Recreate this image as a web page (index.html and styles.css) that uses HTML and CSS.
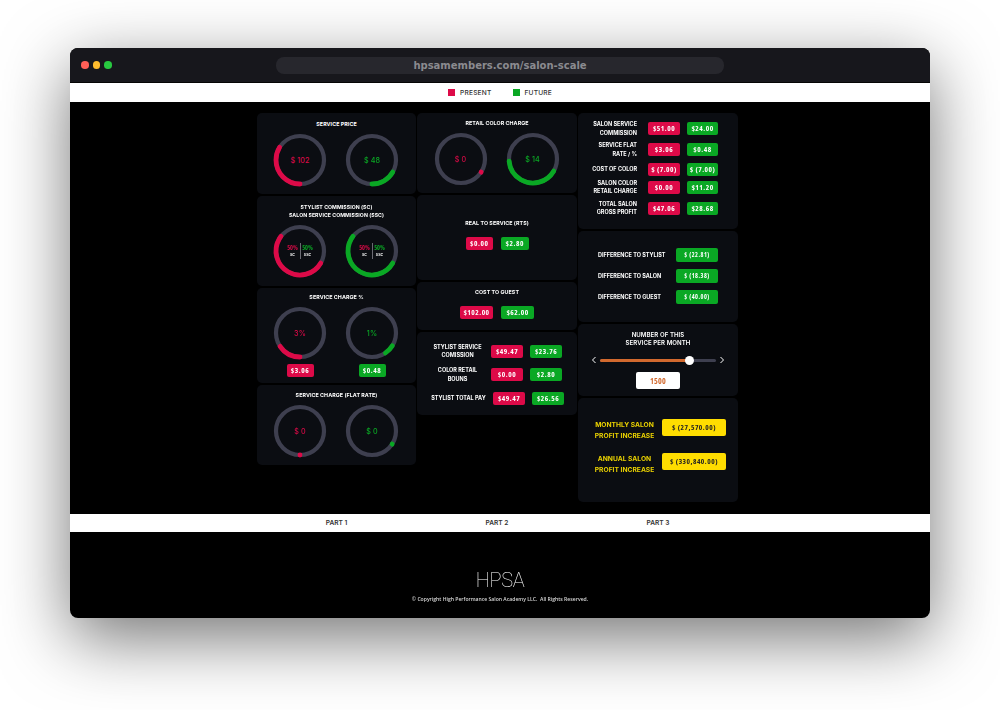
FILE: index.html
```html
<!DOCTYPE html>
<html lang="en">
<head>
<meta charset="utf-8">
<title>HPSA Salon Scale</title>
<link rel="stylesheet" href="styles.css">
</head>
<body>
<div class="window">
  <header class="titlebar">
    <div class="lights"><i class="light l-red"></i><i class="light l-yellow"></i><i class="light l-green"></i></div>
    <div class="address">hpsamembers.com/salon-scale</div>
  </header>
  <div class="legend">
    <span class="legend-item"><i class="swatch red"></i>PRESENT</span>
    <span class="legend-item"><i class="swatch green"></i>FUTURE</span>
  </div>
  <main class="columns">
    <section class="col">
      <div class="card c-price">
        <h3>SERVICE PRICE</h3>
        <div class="donuts">
          <div class="donut"><svg viewBox="0 0 52 52"><circle class="track" cx="26" cy="26" r="24"/><circle class="arc a-red" cx="26" cy="26" r="24" pathLength="360" stroke-dasharray="122 360" transform="rotate(90 26 26)"/></svg><span class="dv t-red">$ 102</span></div>
          <div class="donut"><svg viewBox="0 0 52 52"><circle class="track" cx="26" cy="26" r="24"/><circle class="arc a-green" cx="26" cy="26" r="24" pathLength="360" stroke-dasharray="60 360" transform="rotate(30 26 26)"/></svg><span class="dv t-green">$ 48</span></div>
        </div>
      </div>
      <div class="card c-comm">
        <h3>STYLIST COMMISSION (SC)<br>SALON SERVICE COMMISSION (SSC)</h3>
        <div class="donuts">
          <div class="donut"><svg viewBox="0 0 52 52"><circle class="track" cx="26" cy="26" r="24"/><circle class="arc a-red" cx="26" cy="26" r="24" pathLength="360" stroke-dasharray="188 360" transform="rotate(30 26 26)"/></svg>
            <div class="split"><div class="sp"><b class="t-red">50%</b><small>SC</small></div><div class="sp sp-r"><b class="t-green">50%</b><small>SSC</small></div></div></div>
          <div class="donut"><svg viewBox="0 0 52 52"><circle class="track" cx="26" cy="26" r="24"/><circle class="arc a-green" cx="26" cy="26" r="24" pathLength="360" stroke-dasharray="188 360" transform="rotate(30 26 26)"/></svg>
            <div class="split"><div class="sp"><b class="t-red">50%</b><small>SC</small></div><div class="sp sp-r"><b class="t-green">50%</b><small>SSC</small></div></div></div>
        </div>
      </div>
      <div class="card c-pct">
        <h3>SERVICE CHARGE %</h3>
        <div class="donuts">
          <div class="donut"><svg viewBox="0 0 52 52"><circle class="track" cx="26" cy="26" r="24"/><circle class="arc a-red" cx="26" cy="26" r="24" pathLength="360" stroke-dasharray="56 360" transform="rotate(90 26 26)"/></svg><span class="dv t-red">3%</span></div>
          <div class="donut"><svg viewBox="0 0 52 52"><circle class="track" cx="26" cy="26" r="24"/><circle class="arc a-green" cx="26" cy="26" r="24" pathLength="360" stroke-dasharray="24 360" transform="rotate(32 26 26)"/></svg><span class="dv t-green">1%</span></div>
        </div>
        <div class="under-pills"><span class="pill red">$3.06</span><span class="pill green">$0.48</span></div>
      </div>
      <div class="card c-flat">
        <h3>SERVICE CHARGE (FLAT RATE)</h3>
        <div class="donuts">
          <div class="donut"><svg viewBox="0 0 52 52"><circle class="track" cx="26" cy="26" r="24"/><circle class="arc a-red" cx="26" cy="26" r="24" pathLength="360" stroke-dasharray="0.1 360" transform="rotate(90 26 26)"/></svg><span class="dv t-red">$ 0</span></div>
          <div class="donut"><svg viewBox="0 0 52 52"><circle class="track" cx="26" cy="26" r="24"/><circle class="arc a-green" cx="26" cy="26" r="24" pathLength="360" stroke-dasharray="0.1 360" transform="rotate(33 26 26)"/></svg><span class="dv t-green">$ 0</span></div>
        </div>
      </div>
    </section>
    <section class="col">
      <div class="card c-retail">
        <h3>RETAIL COLOR CHARGE</h3>
        <div class="donuts">
          <div class="donut"><svg viewBox="0 0 52 52"><circle class="track" cx="26" cy="26" r="24"/><circle class="arc a-red" cx="26" cy="26" r="24" pathLength="360" stroke-dasharray="0.1 360" transform="rotate(33 26 26)"/></svg><span class="dv t-red">$ 0</span></div>
          <div class="donut"><svg viewBox="0 0 52 52"><circle class="track" cx="26" cy="26" r="24"/><circle class="arc a-green" cx="26" cy="26" r="24" pathLength="360" stroke-dasharray="145 360" transform="rotate(30 26 26)"/></svg><span class="dv t-green">$ 14</span></div>
        </div>
      </div>
      <div class="card c-rts">
        <h3>REAL TO SERVICE (RTS)</h3>
        <div class="pills"><span class="pill red">$0.00</span><span class="pill green">$2.80</span></div>
      </div>
      <div class="card c-cost">
        <h3>COST TO GUEST</h3>
        <div class="pills"><span class="pill red wide">$102.00</span><span class="pill green wide">$62.00</span></div>
      </div>
      <div class="card c-pay">
        <div class="row"><span class="label">STYLIST SERVICE COMISSION</span><span class="pill red">$49.47</span><span class="pill green">$23.76</span></div>
        <div class="row"><span class="label">COLOR RETAIL BOUNS</span><span class="pill red">$0.00</span><span class="pill green">$2.80</span></div>
        <div class="row"><span class="label nowrap">STYLIST TOTAL PAY</span><span class="pill red">$49.47</span><span class="pill green">$26.56</span></div>
      </div>
    </section>
    <section class="col">
      <div class="card c-gross">
        <div class="row"><span class="label">SALON SERVICE COMMISSION</span><span class="pill red">$51.00</span><span class="pill green">$24.00</span></div>
        <div class="row"><span class="label">SERVICE FLAT<br>RATE / %</span><span class="pill red">$3.06</span><span class="pill green">$0.48</span></div>
        <div class="row"><span class="label">COST OF COLOR</span><span class="pill red">$ (7.00)</span><span class="pill green">$ (7.00)</span></div>
        <div class="row"><span class="label">SALON COLOR<br>RETAIL CHARGE</span><span class="pill red">$0.00</span><span class="pill green">$11.20</span></div>
        <div class="row"><span class="label">TOTAL SALON<br>GROSS PROFIT</span><span class="pill red">$47.06</span><span class="pill green">$28.68</span></div>
      </div>
      <div class="card c-diff">
        <div class="row"><span class="label">DIFFERENCE TO STYLIST</span><span class="pill green">$ (22.81)</span></div>
        <div class="row"><span class="label">DIFFERENCE TO SALON</span><span class="pill green">$ (18.38)</span></div>
        <div class="row"><span class="label">DIFFERENCE TO GUEST</span><span class="pill green">$ (40.00)</span></div>
      </div>
      <div class="card c-count">
        <h3>NUMBER OF THIS<br>SERVICE PER MONTH</h3>
        <div class="slider">
          <svg class="chev" viewBox="0 0 6 8"><path d="M4.5 1 L1.5 4 L4.5 7"/></svg>
          <div class="rail"><div class="rail-fill"></div><div class="thumb"></div></div>
          <svg class="chev" viewBox="0 0 6 8"><path d="M1.5 1 L4.5 4 L1.5 7"/></svg>
        </div>
        <div class="count">1500</div>
      </div>
      <div class="card c-profit">
        <div class="row"><span class="label">MONTHLY SALON PROFIT INCREASE</span><span class="pill yellow">$ (27,570.00)</span></div>
        <div class="row"><span class="label">ANNUAL SALON PROFIT INCREASE</span><span class="pill yellow">$ (330,840.00)</span></div>
      </div>
    </section>
  </main>
  <nav class="parts">
    <span>PART 1</span><span>PART 2</span><span>PART 3</span>
  </nav>
  <footer class="footer">
    <div class="logo">HPSA</div>
    <p>© Copyright High Performance Salon Academy LLC.&nbsp; All Rights Reserved.</p>
  </footer>
</div>
</body>
</html>
```
FILE: styles.css
```css
* { box-sizing: border-box; }
html, body { margin: 0; height: 100%; }
body {
  background: #fff;
  padding: 48px 70px 0;
  font-family: "Inter", "Liberation Sans", sans-serif;
  overflow: hidden;
}
.window {
  width: 860px;
  height: 570px;
  background: #000;
  border-radius: 8px;
  overflow: hidden;
  box-shadow: 0 20px 68px rgba(0,0,0,.55);
  display: flex;
  flex-direction: column;
}
.titlebar {
  height: 35px;
  flex: none;
  background: #17171c;
  border-bottom: 1px solid #050505;
  display: flex;
  align-items: center;
}
.lights { width: 206px; display: flex; gap: 4px; padding-left: 11px; flex: none; }
.light { width: 7.5px; height: 7.5px; border-radius: 50%; display: block; }
.l-red { background: #ff5f57; }
.l-yellow { background: #febc2e; }
.l-green { background: #28c840; }
.address {
  width: 448px;
  height: 17px;
  border-radius: 8px;
  background: #27272d;
  color: #8b8b90;
  font: bold 10px/17px "DejaVu Sans", sans-serif;
  text-align: center;
}
.legend {
  height: 19px;
  flex: none;
  background: #fff;
  display: flex;
  justify-content: center;
  gap: 21px;
  align-items: center;
  color: #333;
  font-size: 6.6px;
  font-weight: 500;
  letter-spacing: .2px;
}
.legend-item { display: flex; align-items: center; gap: 5px; }
.swatch { width: 7px; height: 7px; display: block; margin-top: -1px; }
.swatch.red { background: #dd0a48; }
.swatch.green { background: #0aa824; }
.columns {
  flex: none;
  height: 412px;
  display: grid;
  grid-template-columns: 159px 160px 160px;
  gap: 1px;
  justify-content: center;
  padding-top: 11px;
  padding-right: 5px;
  will-change: opacity;
}
.col { display: flex; flex-direction: column; gap: 2px; }
.card {
  background: #0b0d12;
  border-radius: 5px;
  color: #fff;
  flex: none;
}
h3 {
  margin: 0;
  font-size: 5.35px;
  line-height: 8px;
  font-weight: 700;
  text-align: center;
  letter-spacing: .05px;
}
.donuts { display: flex; justify-content: center; gap: 20px; padding-right: 1px; }
.donut { width: 52px; height: 52px; display: grid; place-items: center; }
.donut > * { grid-area: 1 / 1; }
.donut svg { width: 52px; height: 52px; display: block; overflow: visible; }
.track { fill: none; stroke: #3e3f4f; stroke-width: 4.2; }
.arc { fill: none; stroke-width: 4.8; stroke-linecap: round; }
.a-red { stroke: #dd0a48; }
.a-green { stroke: #0aa824; }
.dv { font-size: 7.2px; font-weight: 500; letter-spacing: .1px; }
.t-red { color: #d80a46; }
.t-green { color: #0aa824; }
.split { display: flex; height: 16px; align-items: center; }
.sp { width: 14px; display: flex; flex-direction: column; align-items: center; gap: 2px; }
.sp-r { border-left: 1px solid #6b6b73; height: 16px; width: 15px; justify-content: center; }
.sp b { font: 700 6.2px/6px "Open Sans", sans-serif; font-stretch: 75%; }
.sp small { font-size: 3.6px; line-height: 4px; color: #fff; font-weight: 600; }
.pill {
  flex: none;
  display: block;
  height: 13px;
  border-radius: 2px;
  color: #fff;
  text-align: center;
  font-family: "Open Sans", sans-serif;
  font-weight: 700;
  font-size: 7.4px;
  line-height: 13px;
  font-stretch: 75%;
  letter-spacing: .5px;
  width: 31px;
}
.pill.red { background: #dd0a48; }
.pill.green { background: #0aa824; }
.pill.yellow { background: #ffdd00; color: #222; width: 64px; height: 17px; line-height: 17px; }
.pills { display: flex; justify-content: center; gap: 8px; }
.pills .pill { width: 27.5px; }
.pills .pill.wide { width: 33px; gap: 7px; }
.under-pills { display: flex; gap: 45px; justify-content: center; margin-top: 5px; padding-right: 1px; }
.under-pills .pill { width: 27px; }
.row { display: flex; align-items: center; }
.label { font-size: 5.5px; line-height: 8.5px; font-weight: 700; }
.nowrap { white-space: nowrap; }

.c-price { height: 81px; padding-top: 7px; }
.c-price h3 { margin-bottom: 6px; }
.c-comm { height: 90px; padding-top: 7px; }
.c-comm h3 { margin-bottom: 6px; line-height: 8.2px; font-size: 5.2px; }
.c-pct { height: 95px; padding-top: 5px; }
.c-pct h3 { margin-bottom: 6px; }
.c-flat { height: 80px; padding-top: 6px; }
.c-flat h3 { margin-bottom: 6px; }

.c-retail { height: 80px; padding-top: 6px; }
.c-retail h3 { margin-bottom: 6px; }
.c-rts { height: 85px; padding-top: 24px; }
.c-rts h3 { margin-bottom: 10px; }
.c-cost { height: 48px; padding-top: 6px; }
.c-cost h3 { margin-bottom: 10px; }
.c-pay { height: 83px; padding: 11px 15px 0 14px; display: flex; flex-direction: column; gap: 7.5px; }
.c-pay .row { gap: 7px; height: 16px; }
.c-pay .label { width: 55px; text-align: center; }
.c-pay .row:last-child .label { flex: none; }
.c-pay .pill { width: 32px; }

.c-gross { height: 116px; padding: 7px 20px 0 0; display: flex; flex-direction: column; }
.c-gross .row { height: 17px; gap: 7px; justify-content: flex-end; }
.c-gross .row:nth-child(1) { margin-bottom: 4px; }
.c-gross .row:nth-child(2) { margin-bottom: 5px; }
.c-gross .row:nth-child(3) { height: 13px; margin-bottom: 2.5px; }
.c-gross .row:nth-child(4) { margin-bottom: 4px; }
.c-gross .label { text-align: right; width: 60px; margin-right: 4px; }
.c-gross .pill { width: 32px; }
.c-gross .pill.green { width: 31px; }
.c-diff { height: 91px; padding: 17px 20px 0 20px; display: flex; flex-direction: column; gap: 7px; }
.c-diff .row { justify-content: space-between; height: 14px; }
.c-diff .pill { width: 42px; height: 14px; line-height: 14px; font-size: 6.2px; }
.c-count { height: 72px; padding-top: 7px; }
.c-count h3 { font-size: 6.1px; margin-bottom: 9px; font-weight: 600; }
.slider { display: flex; align-items: center; justify-content: center; gap: 3px; height: 8px; }
.chev { width: 6px; height: 8px; }
.chev path { fill: none; stroke: #fff; stroke-width: 1; }
.rail { width: 116px; height: 3px; border-radius: 2px; background: #3e3f4f; position: relative; }
.rail-fill { width: 88px; height: 3px; border-radius: 2px; background: #d2692e; }
.thumb { position: absolute; left: 84.5px; top: -3px; width: 9px; height: 9px; border-radius: 50%; background: #fff; }
.count {
  width: 44px; height: 17px; margin: 8px auto 0;
  background: #fff; border-radius: 2px;
  color: #d2692e; text-align: center;
  font-family: "Open Sans", sans-serif;
  font-weight: 700;
  font-size: 8px;
  line-height: 17px;
  font-stretch: 75%;
  letter-spacing: .2px;
}
.c-profit { height: 104px; padding: 21px 12px 0 15px; display: flex; flex-direction: column; gap: 14px; }
.c-profit .row { gap: 6px; height: 20px; align-items: flex-start; }
.c-profit .label { width: 63px; text-align: center; color: #ecd300; font-size: 6.7px; line-height: 10.5px; margin-top: 1px; }

.parts {
  flex: none;
  height: 18px;
  background: #fff;
  color: #333;
  display: grid;
  grid-template-columns: 159px 160px 160px;
  gap: 1px;
  justify-content: center;
  padding-right: 5px;
  font-size: 6.6px;
  font-weight: 600;
  line-height: 18px;
  text-align: center;
}
.footer { flex: 1; color: #d8d8d8; text-align: center; padding-top: 38px; will-change: opacity; }
.logo {
  font-family: "Roboto", sans-serif;
  font-weight: 100;
  font-size: 20px;
  line-height: 20px;
  color: #fff;
  letter-spacing: -.3px;
}
.footer p { margin: 5px 0 0; font-size: 5.1px; line-height: 8px; font-family: "Open Sans", sans-serif; font-weight: 600; }
```
